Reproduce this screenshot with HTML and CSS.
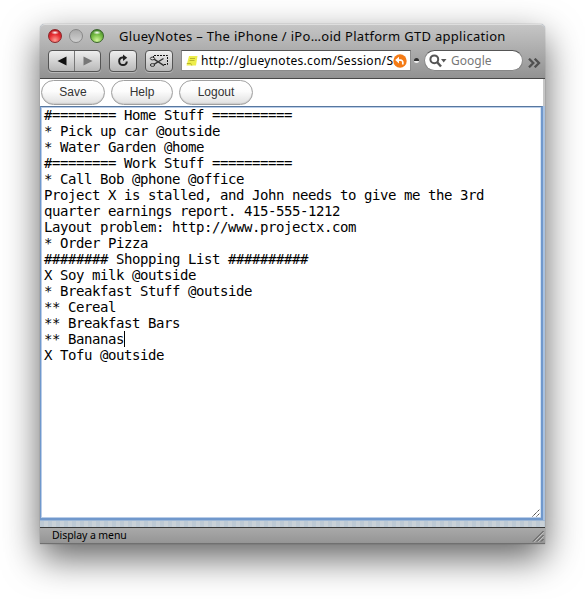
FILE: index.html
```html
<!DOCTYPE html>
<html lang="en">
<head>
<meta charset="utf-8">
<title>GlueyNotes</title>
<link rel="stylesheet" href="styles.css">
</head>
<body>
<main class="window">
  <header class="chrome">
    <div class="titlebar">
      <span class="light red"></span><span class="light gray"></span><span class="light green"></span>
      <h1 class="title">GlueyNotes – The iPhone / iPo…oid Platform GTD application</h1>
    </div>
    <nav class="navbar">
      <div class="history">
        <span class="nav-half"><svg width="10" height="10" viewBox="0 0 10 10"><path d="M.5 5 9.5.5v9z" fill="#111"/></svg></span>
        <span class="nav-half forward"><svg width="10" height="10" viewBox="0 0 10 10"><path d="M9.5 5 .5.5v9z" fill="#777"/></svg></span>
      </div>
      <span class="nav-btn"><svg width="14" height="14" viewBox="0 0 14 14"><path d="M8 3.5H6.5A3.8 3.8 0 1 0 10.8 7.5" fill="none" stroke="#222" stroke-width="2"/><path d="M7 .5 11.2 3.7 7 7z" fill="#222"/></svg></span>
      <span class="nav-btn clip"><svg width="20" height="16" viewBox="0 0 20 16"><path d="M4.5 5V2.5h14v9h-4" fill="none" stroke="#111" stroke-dasharray="2 1"/><path d="M5 11.3 14.5 5.5M5 6.2l10 6.5" stroke="#333" stroke-width="1.4" fill="none"/><ellipse cx="3.5" cy="5.5" rx="2.2" ry="1.4" fill="none" stroke="#333"/><ellipse cx="3.5" cy="12" rx="2.2" ry="1.4" fill="none" stroke="#333"/></svg></span>
      <div class="address">
        <svg class="favicon" width="12" height="12" viewBox="0 0 12 12"><path d="M3 1h8.5L10 10.5H.5z" fill="#eeee4c"/><path d="M4 3.5h5M3.5 5.5h5M.8 8.5h4l1 2" stroke="#b9b62c" fill="none"/></svg>
        <span class="url">http://glueynotes.com/Session/S</span>
        <svg class="snap" width="14" height="14" viewBox="0 0 14 14"><circle cx="7" cy="7" r="6.7" fill="#f47b16"/><path d="M5 6.1h2.6a2.2 2.2 0 0 1 2.2 2.2v2.2" fill="none" stroke="#fff" stroke-width="1.7"/><path d="M2.2 6.1 6 2.8v6.6z" fill="#fff"/></svg>
      </div>
      <span class="divot"></span>
      <div class="search">
        <svg width="18" height="14" viewBox="0 0 18 14"><circle cx="5.3" cy="5.3" r="3.9" fill="none" stroke="#555" stroke-width="2"/><path d="m8 8 4 4.5" stroke="#555" stroke-width="2.4"/><path d="M12 5h5.5l-2.8 3.5z" fill="#555"/></svg>
        <span class="hint">Google</span>
      </div>
      <svg class="more" width="13" height="10" viewBox="0 0 13 10"><path d="m1 .7 4.3 4.3L1 9.3M6.7.7 11 5 6.7 9.3" fill="none" stroke="#505050" stroke-width="2.3"/></svg>
    </nav>
  </header>
  <div class="actions">
    <button class="pill save">Save</button><button class="pill help">Help</button><button class="pill logout">Logout</button>
  </div>
  <section class="editor">
<pre class="notes">#======== Home Stuff ==========
* Pick up car @outside
* Water Garden @home
#======== Work Stuff ==========
* Call Bob @phone @office
Project X is stalled, and John needs to give me the 3rd
quarter earnings report. 415-555-1212
Layout problem: http://www.projectx.com
* Order Pizza
######## Shopping List ##########
X Soy milk @outside
* Breakfast Stuff @outside
** Cereal
** Breakfast Bars
** Bananas<span class="caret"></span>
X Tofu @outside</pre>
    <svg class="grip" width="8" height="8" viewBox="0 0 8 8"><path d="M.5 7.5l7-7M4.5 7.5l3-3" stroke="#333" stroke-dasharray="1.4 .5" fill="none"/></svg>
  </section>
  <div class="strip"></div>
  <footer class="status"><span class="status-text">Display a menu</span>
    <svg width="12" height="12" viewBox="0 0 12 12"><path d="M1 11.5 11.5 1M5 11.5 11.5 5M9 11.5l2.5-2.5" stroke="#4e4e4e" fill="none"/><path d="M2.3 11.8l9.5-9.5M6.3 11.8l5.5-5.5" stroke="#ccc" stroke-width=".8" fill="none"/></svg>
  </footer>
</main>
</body>
</html>
```
FILE: styles.css
```css
* { box-sizing: border-box; }
html, body { height: 100%; }
body { margin: 0; background: #fff; overflow: hidden; padding: 24px 0 0 40px; font-family: "Noto Sans", sans-serif; }
svg { display: block; flex: none; }
.window {
  width: 505px; height: 520px; display: flex; flex-direction: column;
  border-radius: 5px 5px 0 0; background: #a9c1df;
  box-shadow: 0 0 1px 0 rgba(0,0,0,.6), 0 14px 36px rgba(0,0,0,.62);
}
.chrome {
  height: 55px; border-radius: 5px 5px 0 0; border-top: 1px solid #dedede; border-bottom: 1px solid #484848;
  background: linear-gradient(#c5c5c5, #929292);
}
.titlebar { height: 22px; display: flex; align-items: center; padding-left: 8px; }
.light { width: 14px; height: 14px; border-radius: 50%; margin-right: 7px; border: 1px solid #777; flex: none; }
.red { background: radial-gradient(ellipse 4px 2px at 50% 22%, #fff, transparent), radial-gradient(circle at 50% 85%, #ff9d93, #e72d32 50%, #a91219); border-color: #8b2529; }
.gray { background: linear-gradient(#aaa, #d0d0d0); border-color: #888; }
.green { background: radial-gradient(ellipse 4px 2px at 50% 22%, #fff, transparent), radial-gradient(circle at 50% 85%, #d1f69b, #75bb42 50%, #347522); border-color: #3a642b; }
.title { margin: 0 0 0 8px; font-size: 13px; line-height: 18px; font-weight: 400; white-space: nowrap; color: #080808; letter-spacing: .3px; }
.navbar { height: 31px; display: flex; align-items: center; padding: 0 0 4px 8px; }
.history { display: flex; width: 53px; height: 22px; border: 1px solid #555; border-radius: 4px; background: linear-gradient(#eee, #b8b8b8); box-shadow: 0 1px 0 #b8b8b8; }
.nav-half { flex: 1; display: flex; align-items: center; justify-content: center; }
.forward { border-left: 1px solid #777; }
.nav-btn { width: 28px; height: 22px; margin-left: 8px; border: 1px solid #555; border-radius: 4px; background: linear-gradient(#eee, #b8b8b8); display: flex; align-items: center; justify-content: center; box-shadow: 0 1px 0 #b8b8b8; }
.address { width: 230px; height: 21px; margin-left: 8px; background: #fff; border: 1px solid #8b8b8b; border-top-color: #555; display: flex; align-items: center; padding-left: 4px; }
.url { width: 192px; margin-left: 3px; font-size: 12px; line-height: 18px; letter-spacing: .29px; white-space: nowrap; overflow: hidden; color: #000; }
.divot { width: 5px; height: 5px; margin-left: 3px; border-radius: 50%; background: linear-gradient(#333 50%, #eee 50%); }
.search { width: 99px; height: 21px; margin-left: 5px; border: 1px solid #888; border-top-color: #555; border-radius: 11px; background: #fff; display: flex; align-items: center; padding-left: 4px; }
.hint { margin-left: 4px; font-size: 12px; line-height: 18px; color: #777; }
.more { margin: 4px 0 0 5px; }
.actions { height: 27px; padding: 1px 0 0 1px; display: flex; background: #fff; border-right: 2px solid #c6c6c6; }
.pill { height: 25px; padding: 0 0 1px; border: 1px solid #a0a0a0; border-radius: 13px; background: linear-gradient(#fff, #fcfcfc 45%, #e0e0e0); color: #333; font: 12px "Liberation Sans", sans-serif; box-shadow: inset 0 -1px 1px #ccc; }
.save { width: 64px; }
.help { width: 62px; margin-left: 6px; }
.logout { width: 74px; margin-left: 6px; }
.editor { height: 414px; margin-right: 2px; position: relative; background: #fff; border: solid #7098cc; border-width: 1px 2px 2px 1px; border-top-color: #57779f; box-shadow: inset 1px 1px 0 #b9cde8, inset 0 -1px 0 #b9cde8, inset -1px 0 0 #d6e3f2; }
.notes { margin: 0; padding: 0 0 0 3px; font-family: "DejaVu Sans Mono", monospace; font-size: 14px; letter-spacing: -.43px; line-height: 16px; color: #000; }
.caret { display: inline-block; width: 1px; height: 16px; margin-right: -1px; background: #000; vertical-align: top; }
.grip { position: absolute; right: 1px; bottom: 1px; }
.strip { height: 7px; border-top: 1px solid #9db7d6; background: repeating-linear-gradient(90deg, #bdc9d4 0 4px, #c9d1d8 4px 8px); }
.status { height: 17px; border-top: 1px solid #383838; border-bottom: 1px solid #707070; background: linear-gradient(#a9a9a9, #959595); display: flex; align-items: center; justify-content: space-between; padding: 0 1px 0 12px; font-size: 10.5px; line-height: 14px; color: #000; }
.status-text { margin-top: -2px; letter-spacing: -.08px; }
```
